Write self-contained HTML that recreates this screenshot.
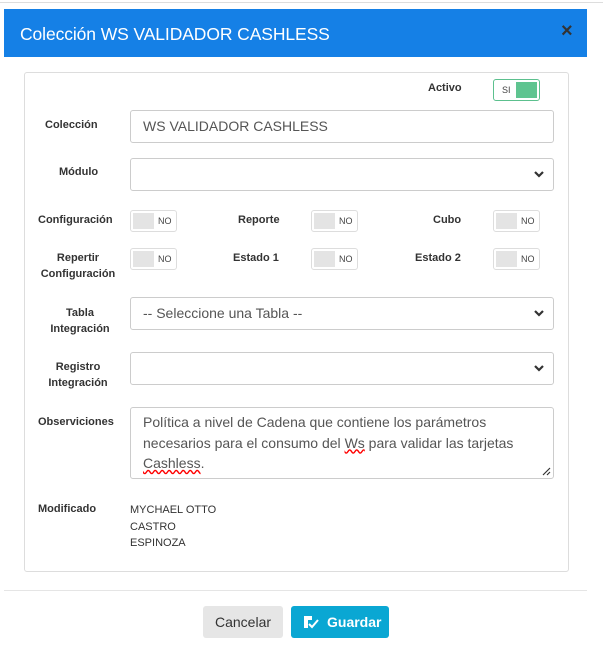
<!DOCTYPE html>
<html><head><meta charset="utf-8"><style>
*{box-sizing:border-box;margin:0;padding:0}
body{width:603px;height:654px;background:#fff;position:relative;overflow:hidden;font-family:"Liberation Sans",Arial,sans-serif;color:#333}
.a{position:absolute}
.hdr{left:4px;top:9px;width:583px;height:48px;background:#1580e6;color:#fff;font-size:17.5px;padding:15px 0 0 16px;letter-spacing:-0.1px}
.x{left:561px;top:20px;color:#333;font-size:20px;font-weight:bold}
.panel{left:24px;top:72px;width:545px;height:500px;border:1px solid #ddd;border-radius:3px}
.lbl{font-size:11px;font-weight:bold;color:#333;line-height:16px}
.inp{left:130px;width:424px;height:33px;border:1px solid #ccc;border-radius:3px;font-size:14px;color:#555;padding:7px 12px}
.chev{position:absolute;right:8px;top:10px}
.tg{width:47px;height:22px;border:1px solid #ddd;border-radius:3px;background:#fff}
.tg .k{position:absolute;left:2px;top:2px;width:21px;height:16px;background:#e4e4e4}
.tg .t{position:absolute;left:27px;top:5px;font-size:9px;color:#444}
</style></head><body>
<div class="a" style="left:0;top:2px;width:603px;height:1px;background:#ddd"></div>
<div class="a hdr">Colección WS VALIDADOR CASHLESS</div>
<div class="a x">×</div>
<div class="a panel"></div>

<div class="a lbl" style="left:428px;top:80px">Activo</div>
<div class="a tg" style="left:493px;top:79px;border-color:#5cc08e"><span class="t" style="left:8px;top:5px">SI</span><div style="position:absolute;left:22px;top:2px;width:21px;height:16px;background:#5fc490"></div></div>

<div class="a lbl" style="left:45px;top:117px">Colección</div>
<div class="a inp" style="top:110px">WS VALIDADOR CASHLESS</div>

<div class="a lbl" style="left:59px;top:164px">Módulo</div>
<div class="a inp" style="top:158px"><svg class="chev" width="12" height="10" viewBox="0 0 12 10"><path d="M2 3l4 4 4-4" stroke="#333" stroke-width="2.2" fill="none"/></svg></div>

<div class="a lbl" style="left:38px;top:212px">Configuración</div>
<div class="a tg" style="left:130px;top:210px"><div class="k"></div><span class="t">NO</span></div>
<div class="a lbl" style="left:238px;top:212px">Reporte</div>
<div class="a tg" style="left:311px;top:210px"><div class="k"></div><span class="t">NO</span></div>
<div class="a lbl" style="left:433px;top:212px">Cubo</div>
<div class="a tg" style="left:493px;top:210px"><div class="k"></div><span class="t">NO</span></div>

<div class="a lbl" style="left:38px;top:250px;width:80px;text-align:center">Repertir<br>Configuración</div>
<div class="a tg" style="left:130px;top:248px"><div class="k"></div><span class="t">NO</span></div>
<div class="a lbl" style="left:233px;top:250px">Estado 1</div>
<div class="a tg" style="left:311px;top:248px"><div class="k"></div><span class="t">NO</span></div>
<div class="a lbl" style="left:415px;top:250px">Estado 2</div>
<div class="a tg" style="left:493px;top:248px"><div class="k"></div><span class="t">NO</span></div>

<div class="a lbl" style="top:305px;left:40px;width:80px;text-align:center">Tabla<br>Integración</div>
<div class="a inp" style="top:297px">-- Seleccione una Tabla --<svg class="chev" width="12" height="10" viewBox="0 0 12 10"><path d="M2 3l4 4 4-4" stroke="#333" stroke-width="2.2" fill="none"/></svg></div>

<div class="a lbl" style="left:38px;top:359px;width:80px;text-align:center">Registro<br>Integración</div>
<div class="a inp" style="top:352px"><svg class="chev" width="12" height="10" viewBox="0 0 12 10"><path d="M2 3l4 4 4-4" stroke="#333" stroke-width="2.2" fill="none"/></svg></div>

<div class="a lbl" style="left:38px;top:414px">Observiciones</div>
<div class="a inp" style="top:407px;height:72px;line-height:20.5px;padding:4px 12px">Política a nivel de Cadena que contiene los parámetros necesarios para el consumo del <u style="text-decoration:underline wavy red">Ws</u> para validar las tarjetas <u style="text-decoration:underline wavy red">Cashless</u>.
<svg style="position:absolute;right:2px;bottom:2px" width="9" height="9"><path d="M1 8L8 1M5 8L8 5" stroke="#333" stroke-width="1.2"/></svg></div>

<div class="a lbl" style="left:38px;top:501px">Modificado</div>
<div class="a" style="left:130px;top:502px;font-size:11px;line-height:16.5px;color:#333">MYCHAEL OTTO<br>CASTRO<br>ESPINOZA</div>

<div class="a" style="left:4px;top:590px;width:583px;height:1px;background:#e5e5e5"></div>
<div class="a" style="left:203px;top:606px;width:80px;height:32px;background:#e6e6e6;border-radius:3px;font-size:14px;color:#333;text-align:center;line-height:32px">Cancelar</div>
<div class="a" style="left:291px;top:606px;width:98px;height:32px;background:#0aa7d3;border-radius:3px;font-size:14px;color:#fff;font-weight:bold;line-height:32px;padding-left:36px">Guardar
<svg style="position:absolute;left:12px;top:9px" width="16" height="14" viewBox="0 0 16 14"><path d="M1 1h8v4H5v8H1z" fill="#fff"/><path d="M6 9l3 3 6-7" stroke="#fff" stroke-width="2" fill="none"/></svg></div>
</body></html>
